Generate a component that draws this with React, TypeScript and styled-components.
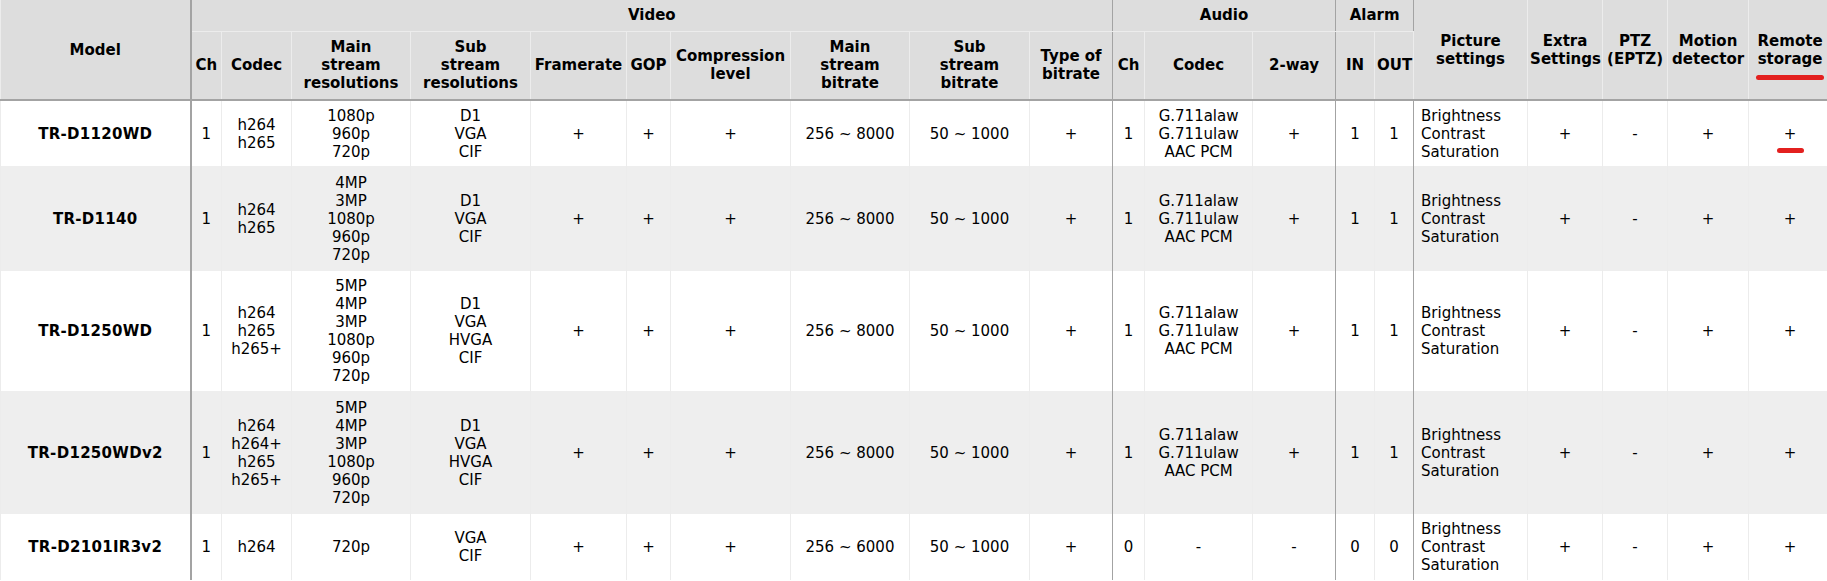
import React from "react";
import styled, { createGlobalStyle, css } from "styled-components";

const Global = createGlobalStyle`
  html, body {
    margin: 0;
    padding: 0;
    background: #ffffff;
    overflow: hidden;
  }
  body {
    font-family: "DejaVu Sans", Verdana, sans-serif;
    font-size: 15px;
    line-height: 18px;
    color: #000000;
  }
`;

const GROUP_LINE = "#a3a3a3";
const CELL_LINE = "#ececec";

const Table = styled.table`
  border-collapse: collapse;
  table-layout: fixed;
  width: 1831px;
`;

const HeadCell = styled.th<{ $divider?: "thick" | "thin"; $base?: boolean }>`
  background: #dddddd;
  color: #000000;
  font-weight: bold;
  text-align: center;
  vertical-align: middle;
  padding: 0 2px;
  border: 1px solid ${CELL_LINE};
  border-top: none;
  ${(p) => p.$base && css`border-bottom: 2px solid ${GROUP_LINE};`}
  ${(p) =>
    p.$divider === "thick"
      ? css`border-right: 2px solid ${GROUP_LINE};`
      : p.$divider === "thin"
      ? css`border-right: 1px solid ${GROUP_LINE};`
      : ""}
  position: relative;
`;

const GroupRow = styled.tr`
  height: 31px;
`;

const SubRow = styled.tr`
  height: 69px;
`;

const BodyRow = styled.tr<{ $alt: boolean; $h: number }>`
  background: ${(p) => (p.$alt ? "#eeeeee" : "#ffffff")};
  height: ${(p) => p.$h}px;
`;

const Cell = styled.td<{
  $divider?: "thick" | "thin";
  $left?: boolean;
  $bold?: boolean;
}>`
  text-align: ${(p) => (p.$left ? "left" : "center")};
  vertical-align: middle;
  padding: ${(p) => (p.$left ? "0 4px 0 7px" : "0 2px")};
  font-weight: ${(p) => (p.$bold ? "bold" : "normal")};
  letter-spacing: ${(p) => (p.$bold ? "0.3px" : "normal")};
  color: #000000;
  border-left: 1px solid ${CELL_LINE};
  border-right: 1px solid ${CELL_LINE};
  border-top: none;
  border-bottom: none;
  ${(p) =>
    p.$divider === "thick"
      ? css`border-right: 2px solid ${GROUP_LINE};`
      : p.$divider === "thin"
      ? css`border-right: 1px solid ${GROUP_LINE};`
      : ""}
  position: relative;
  white-space: nowrap;
`;

const Line = styled.div`
  display: block;
`;

const HeadMark = styled.span`
  position: absolute;
  left: 50%;
  bottom: 19px;
  width: 68px;
  height: 5px;
  margin-left: -34px;
  border-radius: 3px;
  background: #e3201f;
`;

const CellMark = styled.span`
  position: absolute;
  left: 50%;
  top: 47px;
  width: 27px;
  height: 5px;
  margin-left: -13px;
  border-radius: 3px;
  background: #e3201f;
`;

const widths = [
  190, 31, 70, 119, 120, 96, 44, 120, 119, 120, 83, 32, 108, 83, 39, 39, 114,
  75, 65, 81, 83,
];

type RowData = {
  model: string;
  ch: string;
  codec: string[];
  main: string[];
  sub: string[];
  mainBitrate: string;
  aCh: string;
  aCodec: string[];
  twoWay: string;
  alarmIn: string;
  alarmOut: string;
  height: number;
};

const AUDIO = ["G.711alaw", "G.711ulaw", "AAC PCM"];
const RES6 = ["5MP", "4MP", "3MP", "1080p", "960p", "720p"];

const rows: RowData[] = [
  {
    model: "TR-D1120WD",
    ch: "1",
    codec: ["h264", "h265"],
    main: ["1080p", "960p", "720p"],
    sub: ["D1", "VGA", "CIF"],
    mainBitrate: "256 ~ 8000",
    aCh: "1",
    aCodec: AUDIO,
    twoWay: "+",
    alarmIn: "1",
    alarmOut: "1",
    height: 66,
  },
  {
    model: "TR-D1140",
    ch: "1",
    codec: ["h264", "h265"],
    main: ["4MP", "3MP", "1080p", "960p", "720p"],
    sub: ["D1", "VGA", "CIF"],
    mainBitrate: "256 ~ 8000",
    aCh: "1",
    aCodec: AUDIO,
    twoWay: "+",
    alarmIn: "1",
    alarmOut: "1",
    height: 105,
  },
  {
    model: "TR-D1250WD",
    ch: "1",
    codec: ["h264", "h265", "h265+"],
    main: RES6,
    sub: ["D1", "VGA", "HVGA", "CIF"],
    mainBitrate: "256 ~ 8000",
    aCh: "1",
    aCodec: AUDIO,
    twoWay: "+",
    alarmIn: "1",
    alarmOut: "1",
    height: 120,
  },
  {
    model: "TR-D1250WDv2",
    ch: "1",
    codec: ["h264", "h264+", "h265", "h265+"],
    main: RES6,
    sub: ["D1", "VGA", "HVGA", "CIF"],
    mainBitrate: "256 ~ 8000",
    aCh: "1",
    aCodec: AUDIO,
    twoWay: "+",
    alarmIn: "1",
    alarmOut: "1",
    height: 123,
  },
  {
    model: "TR-D2101IR3v2",
    ch: "1",
    codec: ["h264"],
    main: ["720p"],
    sub: ["VGA", "CIF"],
    mainBitrate: "256 ~ 6000",
    aCh: "0",
    aCodec: ["-"],
    twoWay: "-",
    alarmIn: "0",
    alarmOut: "0",
    height: 66,
  },
];

const Lines = ({ items }: { items: string[] }) => (
  <>
    {items.map((t, i) => (
      <Line key={i}>{t}</Line>
    ))}
  </>
);

export default function App() {
  return (
    <>
      <Global />
      <Table>
        <colgroup>
          {widths.map((w, i) => (
            <col key={i} style={{ width: w }} />
          ))}
        </colgroup>
        <thead>
          <GroupRow>
            <HeadCell rowSpan={2} $divider="thick" $base>
              Model
            </HeadCell>
            <HeadCell colSpan={10} $divider="thin">
              Video
            </HeadCell>
            <HeadCell colSpan={3} $divider="thin">
              Audio
            </HeadCell>
            <HeadCell colSpan={2} $divider="thin">
              Alarm
            </HeadCell>
            <HeadCell rowSpan={2} $base>
              <Lines items={["Picture", "settings"]} />
            </HeadCell>
            <HeadCell rowSpan={2} $base>
              <Lines items={["Extra", "Settings"]} />
            </HeadCell>
            <HeadCell rowSpan={2} $base>
              <Lines items={["PTZ", "(EPTZ)"]} />
            </HeadCell>
            <HeadCell rowSpan={2} $base>
              <Lines items={["Motion", "detector"]} />
            </HeadCell>
            <HeadCell rowSpan={2} $base>
              <Lines items={["Remote", "storage"]} />
              <HeadMark />
            </HeadCell>
          </GroupRow>
          <SubRow>
            <HeadCell $base>Ch</HeadCell>
            <HeadCell $base>Codec</HeadCell>
            <HeadCell $base>
              <Lines items={["Main", "stream", "resolutions"]} />
            </HeadCell>
            <HeadCell $base>
              <Lines items={["Sub", "stream", "resolutions"]} />
            </HeadCell>
            <HeadCell $base>Framerate</HeadCell>
            <HeadCell $base>GOP</HeadCell>
            <HeadCell $base>
              <Lines items={["Compression", "level"]} />
            </HeadCell>
            <HeadCell $base>
              <Lines items={["Main", "stream", "bitrate"]} />
            </HeadCell>
            <HeadCell $base>
              <Lines items={["Sub", "stream", "bitrate"]} />
            </HeadCell>
            <HeadCell $base $divider="thin">
              <Lines items={["Type of", "bitrate"]} />
            </HeadCell>
            <HeadCell $base>Ch</HeadCell>
            <HeadCell $base>Codec</HeadCell>
            <HeadCell $base $divider="thin">
              2-way
            </HeadCell>
            <HeadCell $base>IN</HeadCell>
            <HeadCell $base $divider="thin">
              OUT
            </HeadCell>
          </SubRow>
        </thead>
        <tbody>
          {rows.map((r, i) => (
            <BodyRow key={r.model} $alt={i % 2 === 1} $h={r.height}>
              <Cell $bold $divider="thick">
                {r.model}
              </Cell>
              <Cell>{r.ch}</Cell>
              <Cell>
                <Lines items={r.codec} />
              </Cell>
              <Cell>
                <Lines items={r.main} />
              </Cell>
              <Cell>
                <Lines items={r.sub} />
              </Cell>
              <Cell>+</Cell>
              <Cell>+</Cell>
              <Cell>+</Cell>
              <Cell>{r.mainBitrate}</Cell>
              <Cell>50 ~ 1000</Cell>
              <Cell $divider="thin">+</Cell>
              <Cell>{r.aCh}</Cell>
              <Cell>
                <Lines items={r.aCodec} />
              </Cell>
              <Cell $divider="thin">{r.twoWay}</Cell>
              <Cell>{r.alarmIn}</Cell>
              <Cell $divider="thin">{r.alarmOut}</Cell>
              <Cell $left>
                <Lines items={["Brightness", "Contrast", "Saturation"]} />
              </Cell>
              <Cell>+</Cell>
              <Cell>-</Cell>
              <Cell>+</Cell>
              <Cell>
                +{i === 0 && <CellMark />}
              </Cell>
            </BodyRow>
          ))}
        </tbody>
      </Table>
    </>
  );
}
